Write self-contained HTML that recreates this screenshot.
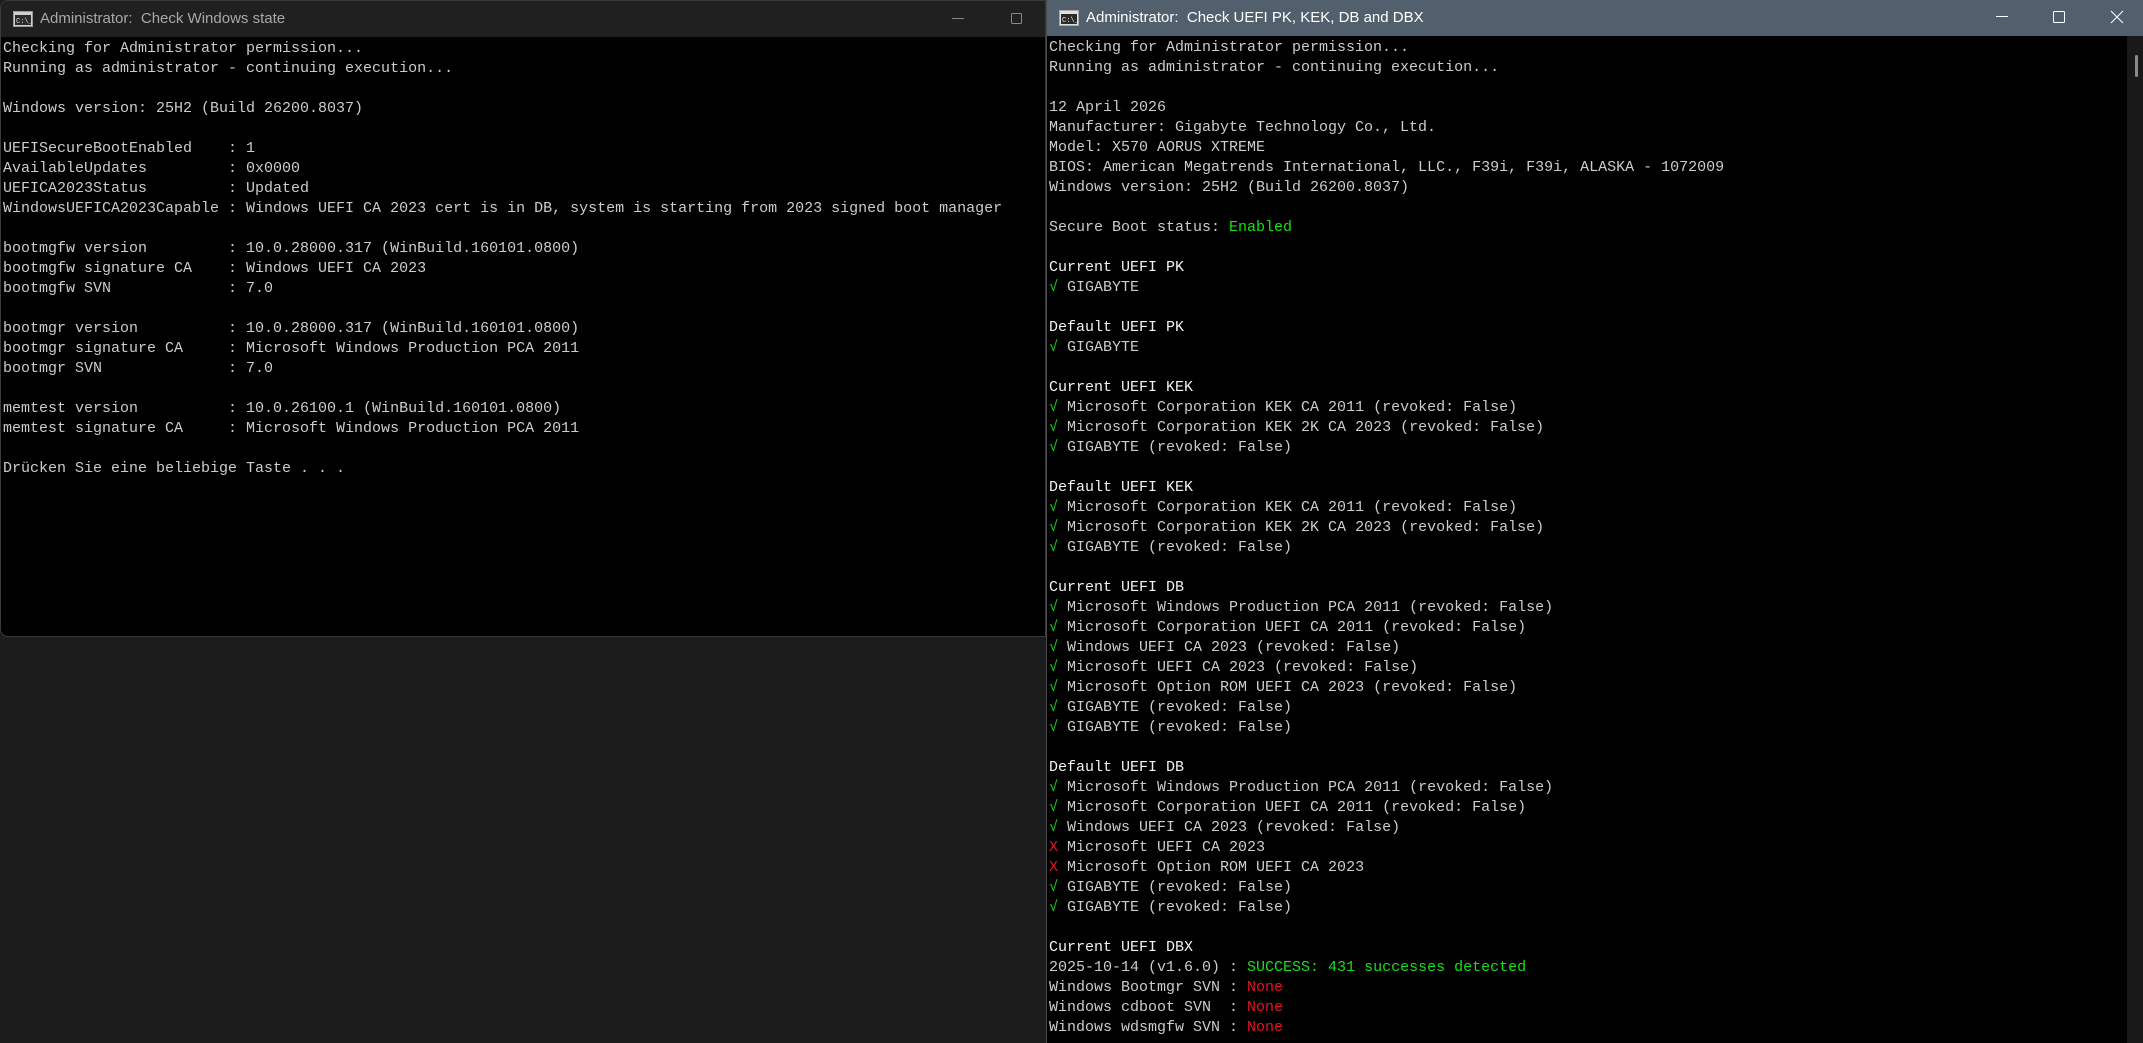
<!DOCTYPE html>
<html><head><meta charset="utf-8">
<style>
html,body{margin:0;padding:0;width:2143px;height:1043px;overflow:hidden;background:#1c1c1c;}
.win{position:absolute;background:#000;box-sizing:border-box;}
.tb{position:absolute;left:0;top:0;right:0;height:36px;}
.title{position:absolute;left:39px;top:9px;font:15px "Liberation Sans",sans-serif;white-space:pre;}
.con{position:absolute;top:37px;left:2px;font:15px/20px "Liberation Mono",monospace;color:#cccccc;white-space:pre;margin:0;padding-top:0.5px;}
.w{color:#f2f2f2}
.g{color:#16e016}
.r{color:#e81123}
.ico{position:absolute;left:12px;top:10px;}
</style></head><body>
<div class="win" style="left:0;top:0;width:1046px;height:637px;border:1px solid #3a3a3a;border-radius:8px 0 0 8px;overflow:hidden;">
 <div class="tb" style="background:#202020"></div>
 <svg class="ico" width="20" height="16" viewBox="0 0 20 16"><rect x="0.5" y="0.5" width="19" height="15" fill="#cfcfcf" stroke="#999"/><rect x="2" y="4" width="16" height="10" fill="#2a2a2a"/><text x="3" y="12" font-family="Liberation Mono" font-size="7" fill="#ddd">C:\_</text></svg>
 <div class="title" style="color:#a8a8a8">Administrator:  Check Windows state</div>
 <svg style="position:absolute;left:945px;top:8px" width="90" height="20"><line x1="6" y1="9.5" x2="18" y2="9.5" stroke="#888" stroke-width="1"/><rect x="65.5" y="4.5" width="10" height="10" fill="none" stroke="#888" stroke-width="1" rx="1"/></svg>
 <pre class="con">Checking for Administrator permission...
Running as administrator - continuing execution...

Windows version: 25H2 (Build 26200.8037)

UEFISecureBootEnabled    : 1
AvailableUpdates         : 0x0000
UEFICA2023Status         : Updated
WindowsUEFICA2023Capable : Windows UEFI CA 2023 cert is in DB, system is starting from 2023 signed boot manager

bootmgfw version         : 10.0.28000.317 (WinBuild.160101.0800)
bootmgfw signature CA    : Windows UEFI CA 2023
bootmgfw SVN             : 7.0

bootmgr version          : 10.0.28000.317 (WinBuild.160101.0800)
bootmgr signature CA     : Microsoft Windows Production PCA 2011
bootmgr SVN              : 7.0

memtest version          : 10.0.26100.1 (WinBuild.160101.0800)
memtest signature CA     : Microsoft Windows Production PCA 2011

Drücken Sie eine beliebige Taste . . .</pre>
</div>
<div class="win" style="left:1046px;top:0;width:1097px;height:1043px;border-left:1px solid #4a4a4a;">
 <div class="tb" style="background:#525f6d"></div>
 <svg class="ico" width="20" height="16" viewBox="0 0 20 16"><rect x="0.5" y="0.5" width="19" height="15" fill="#e0e0e0" stroke="#aaa"/><rect x="2" y="4" width="16" height="10" fill="#2a2a2a"/><text x="3" y="12" font-family="Liberation Mono" font-size="7" fill="#eee">C:\_</text></svg>
 <div class="title" style="color:#fff">Administrator:  Check UEFI PK, KEK, DB and DBX</div>
 <svg style="position:absolute;left:940px;top:6px" width="156" height="26"><line x1="9" y1="10.5" x2="21" y2="10.5" stroke="#fff" stroke-width="1"/><rect x="66.5" y="5.5" width="11" height="11" fill="none" stroke="#fff" stroke-width="1" rx="1"/><path d="M124 5 L136 17 M136 5 L124 17" stroke="#fff" stroke-width="1"/></svg>
 <div style="position:absolute;right:0;top:36px;width:16px;bottom:0;background:#191919"></div>
 <div style="position:absolute;right:5px;top:55px;width:3px;height:22px;background:#8a8a8a;border-radius:2px"></div>
 <pre class="con">Checking for Administrator permission...
Running as administrator - continuing execution...

12 April 2026
Manufacturer: Gigabyte Technology Co., Ltd.
Model: X570 AORUS XTREME
BIOS: American Megatrends International, LLC., F39i, F39i, ALASKA - 1072009
Windows version: 25H2 (Build 26200.8037)

Secure Boot status: <span class="g">Enabled</span>

<span class="w">Current UEFI PK</span>
<span class="g">√</span> GIGABYTE

<span class="w">Default UEFI PK</span>
<span class="g">√</span> GIGABYTE

<span class="w">Current UEFI KEK</span>
<span class="g">√</span> Microsoft Corporation KEK CA 2011 (revoked: False)
<span class="g">√</span> Microsoft Corporation KEK 2K CA 2023 (revoked: False)
<span class="g">√</span> GIGABYTE (revoked: False)

<span class="w">Default UEFI KEK</span>
<span class="g">√</span> Microsoft Corporation KEK CA 2011 (revoked: False)
<span class="g">√</span> Microsoft Corporation KEK 2K CA 2023 (revoked: False)
<span class="g">√</span> GIGABYTE (revoked: False)

<span class="w">Current UEFI DB</span>
<span class="g">√</span> Microsoft Windows Production PCA 2011 (revoked: False)
<span class="g">√</span> Microsoft Corporation UEFI CA 2011 (revoked: False)
<span class="g">√</span> Windows UEFI CA 2023 (revoked: False)
<span class="g">√</span> Microsoft UEFI CA 2023 (revoked: False)
<span class="g">√</span> Microsoft Option ROM UEFI CA 2023 (revoked: False)
<span class="g">√</span> GIGABYTE (revoked: False)
<span class="g">√</span> GIGABYTE (revoked: False)

<span class="w">Default UEFI DB</span>
<span class="g">√</span> Microsoft Windows Production PCA 2011 (revoked: False)
<span class="g">√</span> Microsoft Corporation UEFI CA 2011 (revoked: False)
<span class="g">√</span> Windows UEFI CA 2023 (revoked: False)
<span class="r">X</span> Microsoft UEFI CA 2023
<span class="r">X</span> Microsoft Option ROM UEFI CA 2023
<span class="g">√</span> GIGABYTE (revoked: False)
<span class="g">√</span> GIGABYTE (revoked: False)

<span class="w">Current UEFI DBX</span>
2025-10-14 (v1.6.0) : <span class="g">SUCCESS: 431 successes detected</span>
Windows Bootmgr SVN : <span class="r">None</span>
Windows cdboot SVN  : <span class="r">None</span>
Windows wdsmgfw SVN : <span class="r">None</span></pre>
</div>
</body></html>
